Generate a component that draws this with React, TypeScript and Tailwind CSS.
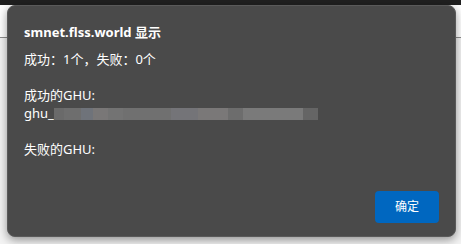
import React from "react";

const blocks = [
  { w: "w-[10px]", c: "bg-[#6a6a6a]" },
  { w: "w-[17px]", c: "bg-[#6e6e6e]" },
  { w: "w-[12px]", c: "bg-[#6f737a]" },
  { w: "w-[15px]", c: "bg-[#797777]" },
  { w: "w-[15px]", c: "bg-[#737373]" },
  { w: "w-[48px]", c: "bg-[#707070]" },
  { w: "w-[27px]", c: "bg-[#747478]" },
  { w: "w-[30px]", c: "bg-[#7a7878]" },
  { w: "w-[15px]", c: "bg-[#6d6d6d]" },
  { w: "w-[60px]", c: "bg-[#7a7a7a]" },
  { w: "w-[15px]", c: "bg-[#656565]" },
];

export default function App() {
  return (
    <div className="relative w-[461px] h-[244px] overflow-hidden bg-[#f3f3f3] font-['Segoe_UI','Noto_Sans','Noto_Sans_CJK_SC',sans-serif]">
      <div className="h-[5px] bg-[#202020]" />
      <div className="h-[33px] border-b border-[#8c8c8c] bg-white" />

      <div className="absolute left-[7px] top-[5px] w-[449px] h-[232px] rounded-[8px] bg-[#4a4a4a] border border-[#5a5a5a] shadow-[0_3px_10px_rgba(0,0,0,0.4)] flex flex-col px-4 text-[13px] text-white">
        <div className="mt-[16px] h-[20px] leading-[20px] font-bold">smnet.flss.world 显示</div>
        <div className="mt-[7px] h-[20px] leading-[20px]">成功：1个，失败：0个</div>
        <div className="mt-[16px] h-[20px] leading-[20px]">成功的GHU:</div>
        <div className="h-[16px] leading-[16px] flex items-center">
          <span>ghu_</span>
          <span className="flex h-[12px] mt-[1px]">
            {blocks.map((b, i) => (
              <span key={i} className={`${b.w} ${b.c} h-full`} />
            ))}
          </span>
        </div>
        <div className="mt-[18px] h-[20px] leading-[20px]">失败的GHU:</div>
        <div className="flex-1" />
        <div className="flex justify-end mb-[13px]">
          <button type="button" className="w-[64px] h-[32px] rounded-[4px] bg-[#0067c0] text-[12px] text-white">
            确定
          </button>
        </div>
      </div>
    </div>
  );
}
